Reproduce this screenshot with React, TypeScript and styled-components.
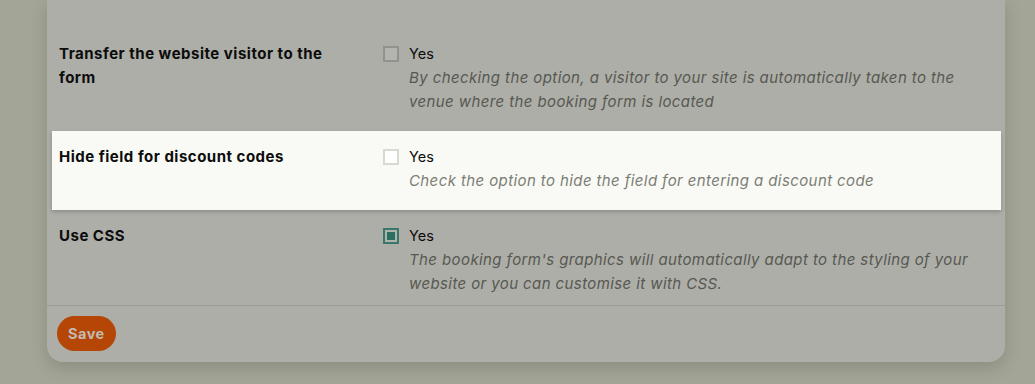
import React from "react";
import styled, { createGlobalStyle } from "styled-components";

const Global = createGlobalStyle`
  html, body { margin: 0; padding: 0; }
  body {
    background: #a3a596;
    font-family: Inter, "Noto Sans", sans-serif;
    -webkit-font-smoothing: antialiased;
  }
`;

const Page = styled.div`
  width: 1035px;
  height: 384px;
  overflow: hidden;
  box-sizing: border-box;
  padding: 0 30px 0 47px;
`;

const Panel = styled.section`
  background: #adaea8;
  border-radius: 0 0 16px 16px;
  box-shadow: 0 6px 16px rgba(60, 62, 45, 0.22);
  padding-top: 28px;
`;

const Rows = styled.div`
  display: flex;
  flex-direction: column;
`;

const Row = styled.div<{ $spot?: boolean; $last?: boolean }>`
  display: grid;
  grid-template-columns: 300px 1fr;
  column-gap: 24px;
  margin: 0 4px 0 5px;
  padding: 14px 7px ${(p) => (p.$last ? "9px" : "17px")};
  background: ${(p) => (p.$spot ? "#f9faf5" : "transparent")};
  box-shadow: ${(p) => (p.$spot ? "0 2px 4px rgba(40, 42, 30, 0.25)" : "none")};
  --desc: ${(p) => (p.$spot ? "#7b7d74" : "#575851")};
  --box-border: ${(p) => (p.$spot ? "#d8d9d3" : "#91928c")};
  --box-fill: ${(p) => (p.$spot ? "#ffffff" : "#b3b4af")};
`;

const Label = styled.div`
  font-size: 15px;
  font-weight: 700;
  letter-spacing: 0.5px;
  line-height: 24px;
  color: #0c0c0c;
`;

const Field = styled.div`
  display: flex;
  flex-direction: column;
`;

const CheckLine = styled.label`
  display: flex;
  align-items: center;
  gap: 10px;
  font-size: 14.5px;
  line-height: 24px;
  color: #0c0c0c;
`;

const Box = styled.span<{ $checked?: boolean }>`
  width: 16px;
  height: 16px;
  box-sizing: border-box;
  border: 2px solid ${(p) => (p.$checked ? "#3c776d" : "var(--box-border)")};
  background: ${(p) => (p.$checked ? "#aeb4ad" : "var(--box-fill)")};
  padding: 2px;
  display: flex;
`;

const Tick = styled.span`
  flex: 1;
  background: #2b6f63;
`;

const Desc = styled.p`
  margin: 0 0 0 26px;
  font-size: 15px;
  font-style: italic;
  letter-spacing: 0.4px;
  line-height: 24px;
  color: var(--desc);
`;

const Footer = styled.div`
  border-top: 1px solid #9b9c96;
  padding: 10px 10px 11px;
  display: flex;
`;

const SaveButton = styled.button`
  height: 35px;
  padding: 0 11px;
  border: none;
  border-radius: 18px;
  background: #b64605;
  color: #c2bbb4;
  font-family: Inter, "Noto Sans", sans-serif;
  font-size: 14.5px;
  font-weight: 700;
  letter-spacing: 0.5px;
  cursor: pointer;
`;

type Item = { label: string; desc: string; checked?: boolean; spot?: boolean };

const items: Item[] = [
  {
    label: "Transfer the website visitor to the form",
    desc: "By checking the option, a visitor to your site is automatically taken to the venue where the booking form is located",
  },
  {
    label: "Hide field for discount codes",
    desc: "Check the option to hide the field for entering a discount code",
    spot: true,
  },
  {
    label: "Use CSS",
    desc: "The booking form's graphics will automatically adapt to the styling of your website or you can customise it with CSS.",
    checked: true,
  },
];

export default function App() {
  return (
    <>
      <Global />
      <Page>
        <Panel>
          <Rows>
            {items.map((it, i) => (
              <Row key={it.label} $spot={it.spot} $last={i === items.length - 1}>
                <Label>{it.label}</Label>
                <Field>
                  <CheckLine>
                    <Box $checked={it.checked}>{it.checked && <Tick />}</Box>
                    Yes
                  </CheckLine>
                  <Desc>{it.desc}</Desc>
                </Field>
              </Row>
            ))}
          </Rows>
          <Footer>
            <SaveButton>Save</SaveButton>
          </Footer>
        </Panel>
      </Page>
    </>
  );
}
